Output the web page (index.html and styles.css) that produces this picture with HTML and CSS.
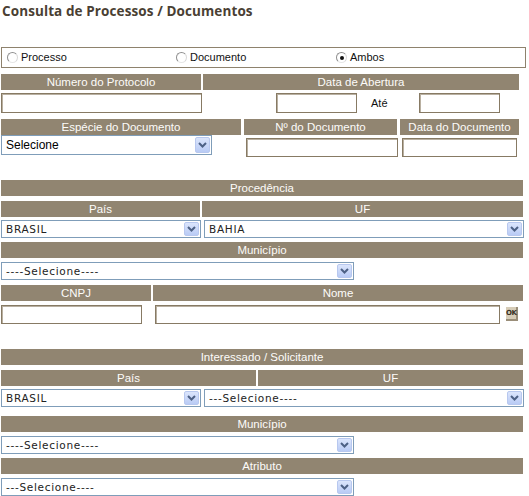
FILE: index.html
```html
<!DOCTYPE html>
<html lang="pt-BR">
<head>
<meta charset="utf-8">
<title>Consulta de Processos / Documentos</title>
<link rel="stylesheet" href="styles.css">
</head>
<body>
<div class="page">
  <h1 class="title">Consulta de Processos / Documentos</h1>

  <div class="radios">
    <label class="radio r1"><span class="dot"></span>Processo</label>
    <label class="radio r2"><span class="dot"></span>Documento</label>
    <label class="radio"><span class="dot on"></span>Ambos</label>
  </div>

  <div class="hrow m6 narrow">
    <div class="hd w-proto">Número do Protocolo</div>
    <div class="hd grow">Data de Abertura</div>
  </div>
  <div class="frow m3 r-abert">
    <div class="inp w-proto2"></div>
    <div class="inp w-date ml-date1"></div>
    <span class="ate">Até</span>
    <div class="inp w-date ml-date2"></div>
  </div>

  <div class="hrow m6 narrow g3">
    <div class="hd w-esp">Espécie do Documento</div>
    <div class="hd w-ndoc">Nº do Documento</div>
    <div class="hd grow">Data do Documento</div>
  </div>
  <div class="frow r-doc">
    <div class="sel w-espsel big"><span class="txt">Selecione</span><span class="arr"><svg width="9" height="6" viewBox="0 0 9 6"><path d="M1 1 L4.5 4.5 L8 1" fill="none" stroke="#4d6185" stroke-width="2"/></svg></span></div>
    <div class="inp w-ndocin ml-ndoc top3"></div>
    <div class="inp w-ddocin ml-ddoc top3"></div>
  </div>

  <div class="hrow m23"><div class="hd grow">Procedência</div></div>
  <div class="hrow m5">
    <div class="hd w-pais1">País</div>
    <div class="hd grow">UF</div>
  </div>
  <div class="frow m3 g3">
    <div class="sel w-pais"><span class="txt">BRASIL</span><span class="arr"><svg width="9" height="6" viewBox="0 0 9 6"><path d="M1 1 L4.5 4.5 L8 1" fill="none" stroke="#4d6185" stroke-width="2"/></svg></span></div>
    <div class="sel grow"><span class="txt">BAHIA</span><span class="arr"><svg width="9" height="6" viewBox="0 0 9 6"><path d="M1 1 L4.5 4.5 L8 1" fill="none" stroke="#4d6185" stroke-width="2"/></svg></span></div>
  </div>
  <div class="hrow m4"><div class="hd grow">Município</div></div>
  <div class="frow m4">
    <div class="sel w-mun"><span class="txt">----Selecione----</span><span class="arr"><svg width="9" height="6" viewBox="0 0 9 6"><path d="M1 1 L4.5 4.5 L8 1" fill="none" stroke="#4d6185" stroke-width="2"/></svg></span></div>
  </div>
  <div class="hrow m5">
    <div class="hd w-cnpj">CNPJ</div>
    <div class="hd grow">Nome</div>
  </div>
  <div class="frow m4 r-cnpj">
    <div class="inp w-cnpjin"></div>
    <div class="inp w-nome ml-nome"></div>
    <button class="ok" type="button">OK</button>
  </div>

  <div class="hrow m25"><div class="hd grow">Interessado / Solicitante</div></div>
  <div class="hrow m5">
    <div class="hd w-pais2">País</div>
    <div class="hd grow">UF</div>
  </div>
  <div class="frow m3 g3">
    <div class="sel w-pais"><span class="txt">BRASIL</span><span class="arr"><svg width="9" height="6" viewBox="0 0 9 6"><path d="M1 1 L4.5 4.5 L8 1" fill="none" stroke="#4d6185" stroke-width="2"/></svg></span></div>
    <div class="sel grow"><span class="txt">---Selecione----</span><span class="arr"><svg width="9" height="6" viewBox="0 0 9 6"><path d="M1 1 L4.5 4.5 L8 1" fill="none" stroke="#4d6185" stroke-width="2"/></svg></span></div>
  </div>
  <div class="hrow m9"><div class="hd grow">Município</div></div>
  <div class="frow m4">
    <div class="sel w-mun"><span class="txt">----Selecione----</span><span class="arr"><svg width="9" height="6" viewBox="0 0 9 6"><path d="M1 1 L4.5 4.5 L8 1" fill="none" stroke="#4d6185" stroke-width="2"/></svg></span></div>
  </div>
  <div class="hrow m4"><div class="hd grow">Atributo</div></div>
  <div class="frow m4">
    <div class="sel w-mun"><span class="txt">---Selecione----</span><span class="arr"><svg width="9" height="6" viewBox="0 0 9 6"><path d="M1 1 L4.5 4.5 L8 1" fill="none" stroke="#4d6185" stroke-width="2"/></svg></span></div>
  </div>
</div>
</body>
</html>
```

FILE: styles.css
```css
* { box-sizing: border-box; }

body {
  margin: 0;
  background: #ffffff;
  font-family: "Liberation Sans", Arial, sans-serif;
  font-size: 11px;
  color: #000;
}

.page {
  width: 529px;
  padding-left: 1px;
}

.title {
  margin: 0;
  height: 47px;
  padding: 2px 0 0 1px;
  font: 700 13.5px/18px "Open Sans", sans-serif;
  color: #4a3f33;
  letter-spacing: 0.1px;
}

/* radio box */
.radios {
  display: flex;
  align-items: center;
  width: 525px;
  height: 21px;
  border: 1px solid #8e826d;
  padding-left: 5px;
  color: #111;
}
.radio {
  display: flex;
  align-items: center;
  gap: 3px;
  line-height: 13px;
}
.r1 { width: 169px; }
.r2 { width: 160px; }
.dot {
  width: 11px;
  height: 11px;
  border-radius: 50%;
  border: 1px solid;
  border-color: #8f8f8f #d8d8d8 #e6e6e6 #8f8f8f;
  background: #fff;
  position: relative;
}
.dot.on::after {
  content: "";
  position: absolute;
  left: 2.5px;
  top: 2.5px;
  width: 4px;
  height: 4px;
  border-radius: 50%;
  background: #111;
}

/* header rows */
.hrow {
  display: flex;
  gap: 2px;
  height: 16px;
  width: 522px;
}
.hrow.narrow { width: 518px; }
.g3 { gap: 3px; }
.hd {
  background: #918571;
  color: #fdfcfa;
  text-align: center;
  font-size: 11.5px;
  line-height: 16px;
  white-space: nowrap;
}
.grow { flex: 1; }

.m3 { margin-top: 3px; }
.m4 { margin-top: 4px; }
.m5 { margin-top: 5px; }
.m6 { margin-top: 6px; }
.m9 { margin-top: 9px; }
.m23 { margin-top: 23px; }
.m25 { margin-top: 25px; }

.w-proto { width: 200px; }
.w-esp { width: 240px; }
.w-ndoc { width: 153px; }
.w-pais1 { width: 199px; }
.w-pais2 { width: 255px; }
.w-cnpj { width: 150px; }

/* field rows */
.frow {
  display: flex;
  align-items: flex-start;
  width: 523px;
}
.r-abert { height: 20px; align-items: center; }
.r-doc { height: 22px; }
.r-cnpj { height: 19px; }

.inp {
  height: 20px;
  border: 1px solid #877a64;
  box-shadow: inset 1px 1px 0 #b9b0a1;
  background: #fff;
}
.w-proto2 { width: 201px; }
.w-date { width: 81px; }
.ml-date1 { margin-left: 74px; }
.ml-date2 { margin-left: 30px; }
.ate {
  margin-left: 14px;
  width: 18px;
  color: #111;
  font-size: 11px;
}

.top3 { margin-top: 3px; height: 19px; }
.w-ndocin { width: 152px; }
.ml-ndoc { margin-left: 34px; }
.w-ddocin { width: 115px; }
.ml-ddoc { margin-left: 4px; }

.w-cnpjin { width: 141px; height: 19px; }
.w-nome { width: 345px; height: 19px; }
.ml-nome { margin-left: 13px; }

.ok {
  margin: 2px 0 0 6px;
  width: 12px;
  height: 14px;
  padding: 0;
  border: 0;
  border-right: 2px solid #9a8e79;
  border-bottom: 2px solid #9a8e79;
  background: #d6ccb7;
  color: #3a3226;
  font: 700 7px/12px "DejaVu Sans", sans-serif;
  letter-spacing: -0.5px;
  text-align: center;
}

/* fake select */
.sel {
  display: flex;
  align-items: center;
  height: 18px;
  border: 1px solid #7f9db9;
  background: #fff;
  padding: 1px;
  font-family: "DejaVu Sans", Verdana, sans-serif;
  font-size: 10.5px;
  letter-spacing: 0.7px;
  color: #222;
}
.sel.big {
  height: 20px;
  font-family: "Liberation Sans", Arial, sans-serif;
  font-size: 12px;
  letter-spacing: 0;
  color: #000;
}
.sel .txt {
  flex: 1;
  padding-left: 3px;
  white-space: nowrap;
  overflow: hidden;
}
.arr {
  width: 15px;
  align-self: stretch;
  display: flex;
  align-items: center;
  justify-content: center;
  border: 1px solid #b8c8ef;
  border-radius: 2px;
  background: linear-gradient(#dbe5fc, #b9cbf5);
}
.w-espsel { width: 211px; }
.w-pais { width: 200px; }
.w-mun { width: 353px; }
```
